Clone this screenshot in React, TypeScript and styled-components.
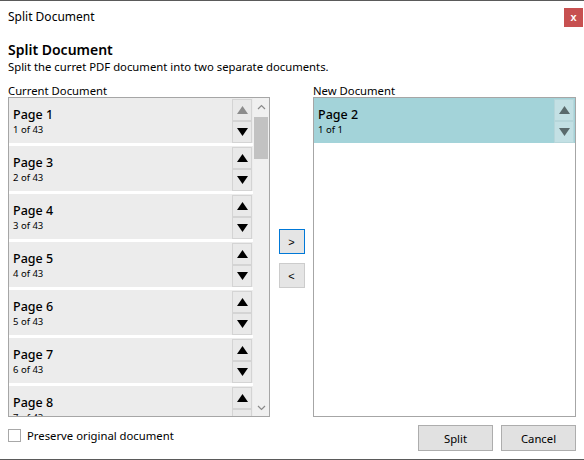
import React from 'react';
import styled, {createGlobalStyle} from 'styled-components';

const GlobalStyle = createGlobalStyle`
	html, body {
		margin: 0;
		padding: 0;
		background: #ffffff;
	}
	body {
		font-family: "Noto Sans", "Open Sans", sans-serif;
		color: #000000;
	}
`;

const Window = styled.div`
	width: 584px;
	height: 460px;
	box-sizing: border-box;
	border-top: 1px solid #5a5a5a;
	border-bottom: 1px solid #5a5a5a;
	background: #ffffff;
	display: flex;
	flex-direction: column;
`;

const TitleBar = styled.div`
	height: 31px;
	display: flex;
	align-items: center;
	justify-content: space-between;
	padding: 0 1px 0 8px;
	font-size: 12px;
`;

const CloseButton = styled.button`
	width: 19px;
	height: 19px;
	margin-top: 2px;
	border: none;
	background: #c75050;
	color: #ffffff;
	font-family: "Liberation Sans", sans-serif;
	font-weight: bold;
	font-size: 11px;
	line-height: 19px;
	padding: 0;
`;

const Body = styled.div`
	flex: 1;
	display: flex;
	flex-direction: column;
	padding: 9px 8px 0 8px;
`;

const Heading = styled.div`
	font-size: 14px;
	font-weight: 600;
	line-height: 18px;
`;

const Subtitle = styled.div`
	font-size: 11.3px;
	line-height: 16px;
	margin-bottom: 9px;
`;

const Columns = styled.div`
	display: grid;
	grid-template-columns: 262px 43px 263px;
`;

const Column = styled.div`
	display: flex;
	flex-direction: column;
`;

const Label = styled.div`
	font-size: 11.3px;
	line-height: 13px;
	height: 13px;
`;

const ListBox = styled.div`
	height: 320px;
	box-sizing: border-box;
	border: 1px solid #a6a6a6;
	display: flex;
	overflow: hidden;
`;

const Items = styled.div`
	flex: 1;
	display: flex;
	flex-direction: column;
	gap: 3px;
	overflow: hidden;
`;

const Item = styled.div<{$selected?: boolean}>`
	flex: 0 0 45px;
	display: flex;
	background: ${p => (p.$selected ? '#a3d3d9' : '#ececec')};
	padding-right: 1px;
`;

const ItemText = styled.div`
	flex: 1;
	padding: 8px 0 0 4px;
`;

const ItemTitle = styled.div`
	font-size: 12.5px;
	font-weight: 500;
	line-height: 17px;
`;

const ItemSub = styled.div`
	font-size: 9.5px;
	line-height: 13px;
`;

const MoveButtons = styled.div`
	display: flex;
	flex-direction: column;
	padding-top: 1px;
`;

const MoveButton = styled.button<{$tint?: boolean}>`
	width: 20px;
	height: 22px;
	box-sizing: border-box;
	padding: 0;
	margin: 0;
	border: 1px solid ${p => (p.$tint ? '#b6d6da' : '#d4d4d4')};
	background: ${p => (p.$tint ? '#c3e0e4' : '#e9e9e9')};
	display: flex;
	align-items: center;
	justify-content: center;
`;

const ScrollBar = styled.div`
	width: 16px;
	background: #f0f0f0;
	display: flex;
	flex-direction: column;
	align-items: center;
`;

const ScrollArrow = styled.div`
	height: 17px;
	display: flex;
	align-items: center;
	justify-content: center;
`;

const Track = styled.div`
	flex: 1;
	width: 100%;
	position: relative;
`;

const Thumb = styled.div`
	position: absolute;
	left: 1px;
	right: 1px;
	top: 2px;
	height: 42px;
	background: #c2c2c2;
`;

const Middle = styled.div`
	display: flex;
	flex-direction: column;
	align-items: center;
	gap: 9px;
	padding-top: 145px;
`;

const TransferButton = styled.button<{$focused?: boolean}>`
	width: 26px;
	height: 25px;
	padding: 0;
	box-sizing: border-box;
	border: 1px solid ${p => (p.$focused ? '#0078d7' : '#cccccc')};
	background: #e5e5e5;
	font-family: "Liberation Sans", sans-serif;
	font-size: 11px;
	color: #000000;
`;

const Footer = styled.div`
	display: flex;
	align-items: flex-start;
	justify-content: space-between;
	padding-top: 8px;
`;

const CheckLabel = styled.label`
	display: flex;
	align-items: center;
	gap: 6px;
	margin-top: 3px;
	font-size: 11.3px;
`;

const CheckBox = styled.span`
	width: 13px;
	height: 13px;
	box-sizing: border-box;
	border: 1px solid #a8a8a8;
	background: #ffffff;
`;

const Actions = styled.div`
	display: flex;
	gap: 8px;
`;

const ActionButton = styled.button`
	width: 75px;
	height: 26px;
	box-sizing: border-box;
	border: 1px solid #adadad;
	background: #e1e1e1;
	font-family: "Noto Sans", sans-serif;
	font-size: 11.3px;
	color: #000000;
	padding: 0;
`;

const Triangle = ({up, color}: {up?: boolean; color: string}) => (
	<svg width="11" height="8" viewBox="0 0 11 8">
		{up ? <polygon points="5.5,0 11,8 0,8" fill={color}/> : <polygon points="0,0 11,0 5.5,8" fill={color}/>}
	</svg>
);

const Chevron = ({up}: {up?: boolean}) => (
	<svg width="9" height="6" viewBox="0 0 9 6">
		<polyline
			points={up ? '1,5 4.5,1.5 8,5' : '1,1 4.5,4.5 8,1'}
			fill="none"
			stroke="#8a8a8a"
			strokeWidth="1.2"
		/>
	</svg>
);

const currentPages = [
	{title: 'Page 1', sub: '1 of 43'},
	{title: 'Page 3', sub: '2 of 43'},
	{title: 'Page 4', sub: '3 of 43'},
	{title: 'Page 5', sub: '4 of 43'},
	{title: 'Page 6', sub: '5 of 43'},
	{title: 'Page 7', sub: '6 of 43'},
	{title: 'Page 8', sub: '7 of 43'},
];

const App = (): JSX.Element => (
	<>
		<GlobalStyle/>
		<Window>
			<TitleBar>
				<span>Split Document</span>
				<CloseButton>x</CloseButton>
			</TitleBar>
			<Body>
				<Heading>Split Document</Heading>
				<Subtitle>Split the curret PDF document into two separate documents.</Subtitle>
				<Columns>
					<Column>
						<Label>Current Document</Label>
						<ListBox>
							<Items>
								{currentPages.map((page, i) => (
									<Item key={page.title}>
										<ItemText>
											<ItemTitle>{page.title}</ItemTitle>
											<ItemSub>{page.sub}</ItemSub>
										</ItemText>
										<MoveButtons>
											<MoveButton><Triangle up color={i === 0 ? '#8c8c8c' : '#000000'}/></MoveButton>
											<MoveButton><Triangle color="#000000"/></MoveButton>
										</MoveButtons>
									</Item>
								))}
							</Items>
							<ScrollBar>
								<ScrollArrow><Chevron up/></ScrollArrow>
								<Track><Thumb/></Track>
								<ScrollArrow><Chevron/></ScrollArrow>
							</ScrollBar>
						</ListBox>
					</Column>
					<Middle>
						<TransferButton $focused>&gt;</TransferButton>
						<TransferButton>&lt;</TransferButton>
					</Middle>
					<Column>
						<Label>New Document</Label>
						<ListBox>
							<Items>
								<Item $selected>
									<ItemText>
										<ItemTitle>Page 2</ItemTitle>
										<ItemSub>1 of 1</ItemSub>
									</ItemText>
									<MoveButtons>
										<MoveButton $tint><Triangle up color="#5a6a6c"/></MoveButton>
										<MoveButton $tint><Triangle color="#5a6a6c"/></MoveButton>
									</MoveButtons>
								</Item>
							</Items>
						</ListBox>
					</Column>
				</Columns>
				<Footer>
					<CheckLabel>
						<CheckBox/>
						Preserve original document
					</CheckLabel>
					<Actions>
						<ActionButton>Split</ActionButton>
						<ActionButton>Cancel</ActionButton>
					</Actions>
				</Footer>
			</Body>
		</Window>
	</>
);

export default App;
